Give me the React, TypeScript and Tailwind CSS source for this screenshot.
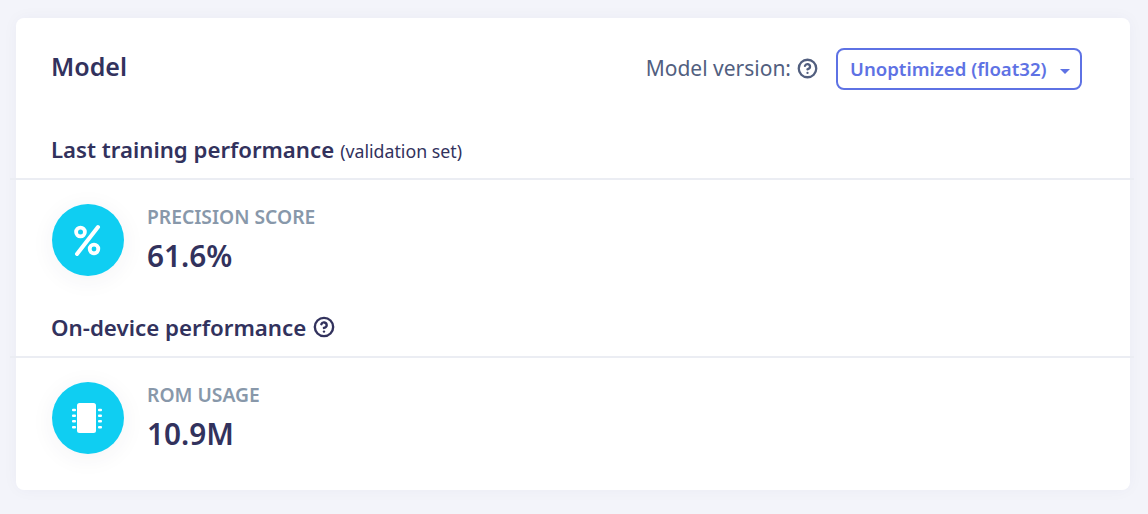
import { CircleHelp } from "lucide-react";

function Metric({ icon, label, value }: { icon: React.ReactNode; label: string; value: string }) {
  return (
    <div className="flex items-center gap-[23px] pt-6 pl-9">
      <div className="flex h-[72px] w-[72px] items-center justify-center rounded-full bg-[#0fcef2] shadow-[0_4px_24px_rgba(50,50,93,0.06)]">
        {icon}
      </div>
      <div className="-mt-[2px] flex flex-col">
        <span className="text-[19.25px] leading-[26px] font-semibold text-[#8898aa]">{label}</span>
        <span className="mt-[7px] text-[29.75px] leading-[38px] font-semibold text-[#32325d]">{value}</span>
      </div>
    </div>
  );
}

function PercentIcon() {
  return (
    <svg width="30" height="34" viewBox="0 0 30 34" fill="none" stroke="white">
      <circle cx="7.5" cy="9" r="4.4" strokeWidth="3.8" />
      <circle cx="21" cy="26" r="4.3" strokeWidth="3.8" />
      <path d="M25 4 4 31" strokeWidth="4" strokeLinecap="round" />
    </svg>
  );
}

function ChipIcon() {
  return (
    <svg className="-translate-x-px" width="30" height="32" viewBox="0 0 30 32" fill="white">
      <rect x="5" y="1" width="19" height="30" rx="2.5" />
      <rect x="0" y="6.8" width="4" height="2.4" rx="1" />
      <rect x="0" y="12.5" width="4" height="2.4" rx="1" />
      <rect x="0" y="18" width="4" height="2.4" rx="1" />
      <rect x="0" y="24" width="4" height="2.4" rx="1" />
      <rect x="26" y="6.8" width="4" height="2.4" rx="1" />
      <rect x="26" y="12.5" width="4" height="2.4" rx="1" />
      <rect x="26" y="18" width="4" height="2.4" rx="1" />
      <rect x="26" y="24" width="4" height="2.4" rx="1" />
    </svg>
  );
}

export default function App() {
  return (
    <div className="h-[514px] w-[1148px] overflow-hidden bg-[#f3f4fa] pt-[18px] pl-4 font-['Noto_Sans','Open_Sans',sans-serif]">
      <div className="h-[472px] w-[1114px] rounded-lg bg-white shadow-[0_0_16px_rgba(50,50,93,0.04)]">
        <div className="flex h-[98px] items-center justify-between pt-1 pr-12 pl-[35px]">
          <h2 className="-mt-[6px] text-[25px] leading-8 font-semibold text-[#32325d]">Model</h2>
          <div className="flex items-center">
            <span className="text-[21px] text-[#525f7f]">Model version:</span>
            <CircleHelp className="mr-[18px] ml-[6px] -mt-[2px] h-[21px] w-[21px] text-[#525f7f]" strokeWidth={2.6} />
            <button className="flex h-[42px] w-[246px] items-center justify-between rounded-lg border-2 border-[#5e72e4] bg-white pr-[10px] pl-[12px] text-[18.6px] font-semibold text-[#5e72e4]">
              Unoptimized (float32)
              <span className="mt-[5px] h-0 w-0 border-x-[5.5px] border-t-[5px] border-x-transparent border-t-[#5e72e4]" />
            </button>
          </div>
        </div>

        <div className="-mr-1 -ml-[6px] flex h-[64px] items-center border-b-2 border-[#ebedf3] pt-[5px] pl-[41px]">
          <h3 className="text-[22.2px] font-semibold text-[#32325d]">Last training performance</h3>
          <span className="ml-[6px] pt-[3px] text-[17.75px] text-[#32325d]">(validation set)</span>
        </div>
        <Metric icon={<PercentIcon />} label="PRECISION SCORE" value="61.6%" />

        <div className="-mr-1 -ml-[6px] mt-[14px] flex h-[68px] items-center border-b-2 border-[#ebedf3] pt-[10px] pl-[41px]">
          <h3 className="text-[22.3px] font-semibold text-[#32325d]">On-device performance</h3>
          <CircleHelp className="ml-[7px] -mt-[2px] h-[22px] w-[22px] text-[#32325d]" strokeWidth={2.6} />
        </div>
        <Metric icon={<ChipIcon />} label="ROM USAGE" value="10.9M" />
      </div>
    </div>
  );
}
